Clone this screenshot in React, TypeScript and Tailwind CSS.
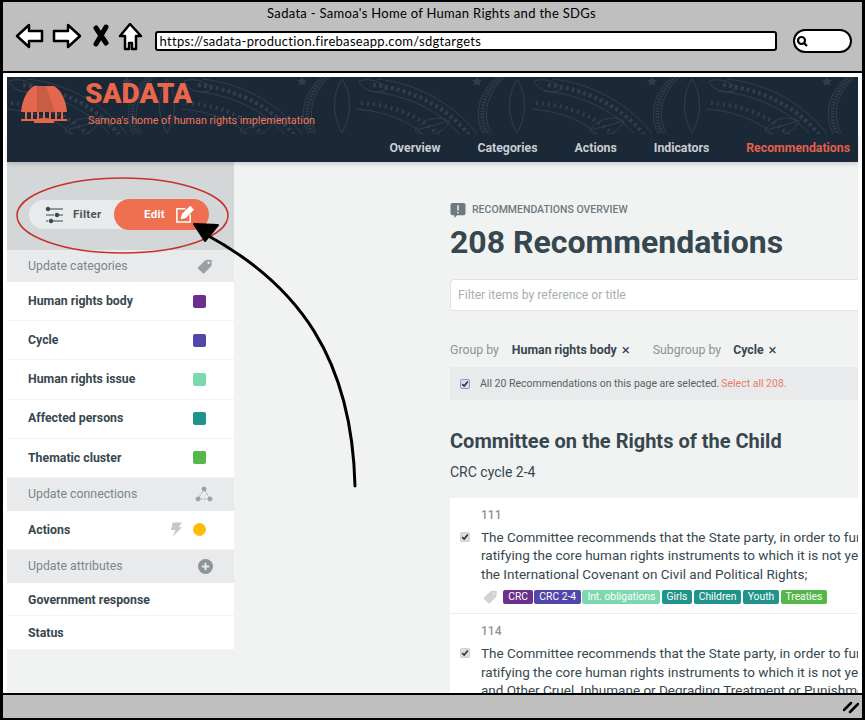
import type { ReactNode } from 'react'

const CATEGORIES = [
  { label: 'Human rights body', color: 'bg-[#6c2f8c]' },
  { label: 'Cycle', color: 'bg-[#5346ab]' },
  { label: 'Human rights issue', color: 'bg-[#7cd8ae]' },
  { label: 'Affected persons', color: 'bg-[#20948b]' },
  { label: 'Thematic cluster', color: 'bg-[#53b848]' },
]

const TAGS = [
  { label: 'CRC', color: 'bg-[#6c2f8c]' },
  { label: 'CRC 2-4', color: 'bg-[#5346ab]' },
  { label: 'Int. obligations', color: 'bg-[#7cd8ae]' },
  { label: 'Girls', color: 'bg-[#20948b]' },
  { label: 'Children', color: 'bg-[#20948b]' },
  { label: 'Youth', color: 'bg-[#20948b]' },
  { label: 'Treaties', color: 'bg-[#53b848]' },
]

function TagIcon({ className = '' }: { className?: string }) {
  return (
    <svg viewBox="0 0 16 16" className={className} fill="currentColor">
      <path d="M1 9.200 8.200 2.400c.3-.3.6-.4 1-.4l4.600-.2c.5 0 .9.4.9.9l-.1 4.600c0 .4-.2.7-.4 1l-7 7c-.4.4-1 .4-1.400 0L1 10.600c-.4-.4-.4-1 0-1.400Z" />
      <circle cx="11.600" cy="4.800" r="1.200" fill="#e8eaec" />
    </svg>
  )
}

function CheckBox({ focused = false }: { focused?: boolean }) {
  return (
    <span
      className={`flex h-[10px] w-[10px] shrink-0 items-center justify-center rounded-[2px] bg-[#dcdcdc] ${
        focused ? 'border border-[#7d9fe0]' : 'border border-[#cfcfcf]'
      }`}
    >
      <svg viewBox="0 0 10 10" className="h-[8px] w-[8px]" fill="none" stroke="#333" strokeWidth="2">
        <path d="M1.500 5.200 4 7.600 8.500 2" />
      </svg>
    </span>
  )
}

function SideHeading({ label, children }: { label: string; children: ReactNode }) {
  return (
    <div className="flex h-[33px] items-center justify-between bg-[#e8eaec] px-[21px] text-[12.300px] text-[#7b868a]">
      <span>{label}</span>
      {children}
    </div>
  )
}

function SideRow({ label, height, children }: { label: string; height: string; children?: ReactNode }) {
  return (
    <div className={`flex items-center justify-between border-b border-[#f1f3f3] bg-white pr-[28px] pl-[21px] text-[12.300px] font-bold text-[#37474f] ${height}`}>
      <span>{label}</span>
      {children}
    </div>
  )
}

function Recommendation({ num, lines, tags = false }: { num: string; lines: string[]; tags?: boolean }) {
  return (
    <div className="border-b border-[#eceeee] pt-[9px] pb-[9px] pl-[10px]">
      <div className="pl-[21px] text-[12px] leading-[16px] font-medium text-[#8a9498]">{num}</div>
      <div className="mt-[5px] flex">
        <div className="w-[21px] shrink-0 pt-[4px]">
          <CheckBox />
        </div>
        <div className="text-[13.500px] leading-[18.400px] whitespace-nowrap text-[#37474f]">
          {lines.map((l) => (
            <div key={l}>{l}</div>
          ))}
        </div>
      </div>
      {tags && (
        <div className="mt-[6px] flex items-center gap-[1.300px] pl-[23px]">
          <TagIcon className="mr-[4px] h-[15px] w-[15px] text-[#d0d3d4]" />
          {TAGS.map((t) => (
            <span key={t.label} className={`rounded-[2px] px-[5px] text-[10.300px] leading-[14px] text-white ${t.color}`}>
              {t.label}
            </span>
          ))}
        </div>
      )}
    </div>
  )
}

function Banner() {
  return (
    <div className="relative flex h-[57px] bg-[#1b2838]">
      <svg className="absolute inset-0 h-full w-full" xmlns="http://www.w3.org/2000/svg">
        <defs>
          <pattern id="tatau" width="175" height="57" patternUnits="userSpaceOnUse">
            <g fill="none" stroke="#2f3d4d" strokeWidth="1">
              <path d="M20 2C60 6 100 28 122 60" />
              <path d="M12 14C52 18 88 36 108 64" />
              <path d="M16 8C56 12 94 32 115 62" strokeWidth="4" strokeDasharray="3 3" />
              <path d="M4 26C40 28 70 42 88 66" strokeWidth="4" strokeDasharray="2 4" />
              <path d="M-2 32C30 34 58 46 72 64" />
              <path d="M142 -2C120 16 116 40 128 60" />
              <path d="M150 -2C128 16 124 40 136 60" />
              <path d="M146 -2C124 16 120 40 132 60" strokeWidth="4" strokeDasharray="1.500 1.500" />
              <path d="M160 2c-10 16-10 36 0 54M160 2c10 16 10 36 0 54" />
              <path d="M58 54c6-12 22-16 34-10-4 12-22 18-34 10Zm4-2c8-2 18-4 28-8" />
              <path d="M2 4c12-4 24 2 28 8-10 6-24 2-28-8Z" />
            </g>
            <path d="M30 0l2 3 3 .5-2.500 2 .5 3-3-1.500-3 1.500.5-3-2.500-2 3-.5Z" fill="#2f3d4d" transform="translate(90 0)" />
          </pattern>
        </defs>
        <rect width="100%" height="100%" fill="url(#tatau)" />
      </svg>
      <svg viewBox="0 0 48 37" className="relative mt-[9px] ml-[13px] h-[37px] w-[48px]">
        <path d="M14 0h20c7 4 12 14 13 26H1C2 14 7 4 14 0Z" fill="#e2674c" />
        <path d="M17 0h9l9 26H17Z" fill="#c95c45" />
        <path d="M1 33h46v2H1Z" fill="#e2674c" />
        <path d="M5 26h2v8H5ZM11 26h2v8h-2ZM17 26h2v8h-2ZM23 26h2v8h-2ZM29 26h2v8h-2ZM35 26h2v8h-2ZM41 26h2v8h-2Z" fill="#e2674c" />
        <path d="M14 35c2-4 18-4 20 0v2H14Z" fill="#e2674c" />
      </svg>
      <div className="relative ml-[17px] flex flex-col">
        <div className="mt-[1px] text-[28px] leading-[32px] font-black text-[#e8674b]">SADATA</div>
        <div className="mt-[3px] ml-[3px] text-[10.800px] leading-[16px] text-[#ee7a5a]">Samoa's home of human rights implementation</div>
      </div>
    </div>
  )
}

function Nav() {
  return (
    <div className="relative flex h-[28px] items-center justify-end gap-[37px] bg-[#1b2838] pr-[8px] text-[12.300px] font-bold text-[#c8ced2] shadow-[0_2px_4px_rgba(0,0,0,0.15)]">
      <span>Overview</span>
      <span>Categories</span>
      <span>Actions</span>
      <span>Indicators</span>
      <span className="text-[#e0604a]">Recommendations</span>
    </div>
  )
}

function Sidebar() {
  return (
    <div className="flex w-[227px] shrink-0 flex-col bg-[#f0f2f2] shadow-[2px_0_3px_rgba(0,0,0,0.08)]">
      <div className="flex h-[88px] items-center bg-[#d3d7d8] pt-[17px] pl-[22px]">
        <div className="flex h-[29px] w-[180px] items-center rounded-full bg-[#e8eaec]">
          <svg viewBox="0 0 20 18" className="ml-[16px] h-[18px] w-[20px]" fill="#37474f" stroke="#37474f">
            <path d="M5 3h13M1 9h8M14 9h4M1 15h2M8 15h10" strokeWidth="1.200" />
            <circle cx="3" cy="3" r="1.800" />
            <circle cx="12" cy="9" r="1.800" />
            <circle cx="6" cy="15" r="1.800" />
          </svg>
          <span className="ml-[8px] text-[11.500px] font-bold tracking-[0.3px] text-[#4a565b]">Filter</span>
          <div className="ml-auto flex h-[31px] w-[95px] items-center rounded-full bg-[#ee7050] pl-[30px]">
            <span className="text-[11.500px] font-bold tracking-[0.3px] text-white">Edit</span>
            <svg viewBox="0 0 20 20" className="ml-[10px] h-[19px] w-[19px]" fill="none" stroke="#fff" strokeWidth="1.600">
              <path d="M16 10v8H2V4h9" />
              <path d="M7 14l1-4 8-8 3 3-8 8Z" fill="#fff" />
            </svg>
          </div>
        </div>
      </div>
      <div className="flex h-[32px] items-center justify-between bg-[#e8eaec] px-[21px] text-[12.300px] text-[#7b868a]">
        <span>Update categories</span>
        <TagIcon className="h-[16px] w-[16px] text-[#9aa1a4]" />
      </div>
      {CATEGORIES.map((c) => (
        <SideRow key={c.label} label={c.label} height="h-[39.200px]">
          <span className={`h-[13px] w-[13px] rounded-[2px] ${c.color}`} />
        </SideRow>
      ))}
      <SideHeading label="Update connections">
        <svg viewBox="0 0 18 16" className="h-[16px] w-[18px]" fill="#9aa1a4" stroke="#9aa1a4">
          <path d="M9 3 3 13h12Z" fill="none" strokeDasharray="2 1.500" />
          <circle cx="9" cy="3" r="2" />
          <circle cx="3" cy="13" r="2" />
          <circle cx="15" cy="13" r="2" />
        </svg>
      </SideHeading>
      <SideRow label="Actions" height="h-[39px]">
        <div className="flex items-center gap-[10px]">
          <svg viewBox="0 0 14 15" className="h-[15px] w-[13px]" fill="#c4c8ca">
            <path d="M3 0h10L9 5h4L3 15l3-7H1Z" />
          </svg>
          <span className="h-[13px] w-[13px] rounded-full bg-[#fdbb0a]" />
        </div>
      </SideRow>
      <SideHeading label="Update attributes">
        <svg viewBox="0 0 16 16" className="h-[15px] w-[15px]">
          <circle cx="8" cy="8" r="8" fill="#8c9598" />
          <path d="M8 4v8M4 8h8" stroke="#e8eaec" strokeWidth="2" />
        </svg>
      </SideHeading>
      <SideRow label="Government response" height="h-[33px] pt-[2px]" />
      <SideRow label="Status" height="h-[34px] pt-[2px]" />
    </div>
  )
}

function Main() {
  return (
    <div className="min-w-0 flex-1 overflow-hidden bg-[#f1f3f3] pt-[39px] pl-[216px]">
      <div className="flex h-[18px] items-center gap-[6px] text-[10.500px] font-medium text-[#6f7a7e]">
        <svg viewBox="0 0 16 16" className="h-[15px] w-[16px]">
          <path d="M2 0h12a2 2 0 0 1 2 2v9a2 2 0 0 1-2 2H7l-3 3v-3H2a2 2 0 0 1-2-2V2a2 2 0 0 1 2-2Z" fill="#6f7a7e" />
          <path d="M8 2.500v5.500M8 9.500v1.500" stroke="#fff" strokeWidth="1.500" />
        </svg>
        <span>RECOMMENDATIONS OVERVIEW</span>
      </div>
      <h1 className="mt-[4px] text-[32px] leading-[38px] font-bold whitespace-nowrap text-[#37474f]">208 Recommendations</h1>
      <div className="mt-[18px] flex h-[32px] w-[440px] items-center rounded-l-[4px] border border-[#dfe2e3] bg-white pl-[7px] text-[12.200px] text-[#a8afb2]">
        Filter items by reference or title
      </div>
      <div className="mt-[31px] flex h-[16px] items-center text-[12.300px] whitespace-nowrap">
        <span className="text-[#8a9498]">Group by</span>
        <span className="ml-[13px] font-bold text-[#37474f]">Human rights body</span>
        <span className="ml-[5px] text-[15px] leading-none text-[#37474f]">×</span>
        <span className="ml-[23px] text-[#8a9498]">Subgroup by</span>
        <span className="ml-[12px] font-bold text-[#37474f]">Cycle</span>
        <span className="ml-[5px] text-[15px] leading-none text-[#37474f]">×</span>
      </div>
      <div className="mt-[9px] flex h-[33px] w-[440px] items-center bg-[#e8eaec] pl-[10px] text-[10.500px] whitespace-nowrap text-[#56625f]">
        <CheckBox focused />
        <span className="ml-[10px]">All 20 Recommendations on this page are selected.</span>
        <span className="ml-[2px] text-[#ee7a66]">Select all 208.</span>
      </div>
      <h2 className="mt-[28px] text-[20px] leading-[26px] font-bold whitespace-nowrap text-[#37474f]">Committee on the Rights of the Child</h2>
      <div className="mt-[8px] text-[14px] leading-[20px] text-[#37474f]">CRC cycle 2-4</div>
      <div className="mt-[16px] w-[440px] bg-white">
        <Recommendation
          num="111"
          tags
          lines={[
            'The Committee recommends that the State party, in order to further',
            'ratifying the core human rights instruments to which it is not yet a party',
            'the International Covenant on Civil and Political Rights;',
          ]}
        />
        <Recommendation
          num="114"
          lines={[
            'The Committee recommends that the State party, in order to further',
            'ratifying the core human rights instruments to which it is not yet a party',
            'and Other Cruel, Inhumane or Degrading Treatment or Punishment',
          ]}
        />
      </div>
    </div>
  )
}

function BrowserBar() {
  return (
    <div className="h-[69px] shrink-0 bg-[#bfbfbf] font-['Lato',sans-serif]">
      <div className="pt-[2px] pr-[2px] text-center text-[13px] leading-[18px] tracking-[0.3px] text-black">
        Sadata - Samoa's Home of Human Rights and the SDGs
      </div>
      <div className="mt-[1px] flex items-start">
        <svg viewBox="0 0 135 30" className="ml-[11px] h-[30px] w-[135px]" stroke="#000" strokeWidth="2.500" strokeLinejoin="round">
          <path d="M3 13 15 2v6h13v10H15v6Z" fill="#fff" />
          <path d="M66 13 54 2v6H40v10h14v6Z" fill="#fff" />
          <path d="M82 5l10 15M92 4 82 21" fill="none" strokeWidth="5" strokeLinecap="round" />
          <path d="M116 1 106 13h5v13h4v-6h3v6h4V13h5Z" fill="#fff" />
        </svg>
        <div className="mt-[8px] ml-[6px] flex h-[20px] w-[622px] items-center rounded-[3px] border-[2.500px] border-black bg-white pl-[2.500px] text-[13px] leading-none tracking-[0.3px] text-black">
          https://sadata-production.firebaseapp.com/sdgtargets
        </div>
        <div className="mt-[6px] ml-[16px] flex h-[24px] w-[59px] items-center rounded-full border-[2.500px] border-black bg-white pl-[1px]">
          <svg viewBox="0 0 12 12" className="h-[12px] w-[12px]" fill="none" stroke="#000" strokeWidth="2.200">
            <circle cx="5.500" cy="5.500" r="3.500" />
            <path d="M8 8l3 3" />
          </svg>
        </div>
      </div>
    </div>
  )
}

export default function App() {
  return (
    <div className="relative flex h-[720px] w-[865px] flex-col overflow-hidden border-x-[3px] border-t-[2px] border-b-[2px] border-black bg-white font-['Roboto',sans-serif]">
      <BrowserBar />
      <div className="h-[2px] shrink-0 bg-black" />
      <div className="flex min-h-0 flex-1 flex-col pt-[4px] pr-[4px] pl-[4px]">
        <Banner />
        <Nav />
        <div className="flex min-h-0 flex-1">
          <Sidebar />
          <Main />
        </div>
      </div>
      <div className="flex h-[25px] shrink-0 items-center justify-end border-t-[2px] border-black bg-[#bfbfbf] pr-[3px]">
        <svg viewBox="0 0 16 14" className="h-[14px] w-[16px]" stroke="#000" strokeWidth="2.500" strokeLinecap="round">
          <path d="M1 10 8 3M7 12l8-8" />
        </svg>
      </div>
      {/* red ellipse and arrow drawn over the page */}
      <svg className="pointer-events-none absolute -top-[2px] -left-[3px] h-[720px] w-[865px]" fill="none">
        <ellipse cx="122.500" cy="215.500" rx="105.500" ry="37.500" stroke="#c8302c" strokeWidth="1.500" />
        <path d="M355 486C352 360 300 285 205 234" stroke="#000" strokeWidth="3" strokeLinecap="round" />
        <path d="M194 224 218 225 205 241Z" fill="#000" stroke="#000" strokeWidth="2" strokeLinejoin="round" />
      </svg>
    </div>
  )
}
